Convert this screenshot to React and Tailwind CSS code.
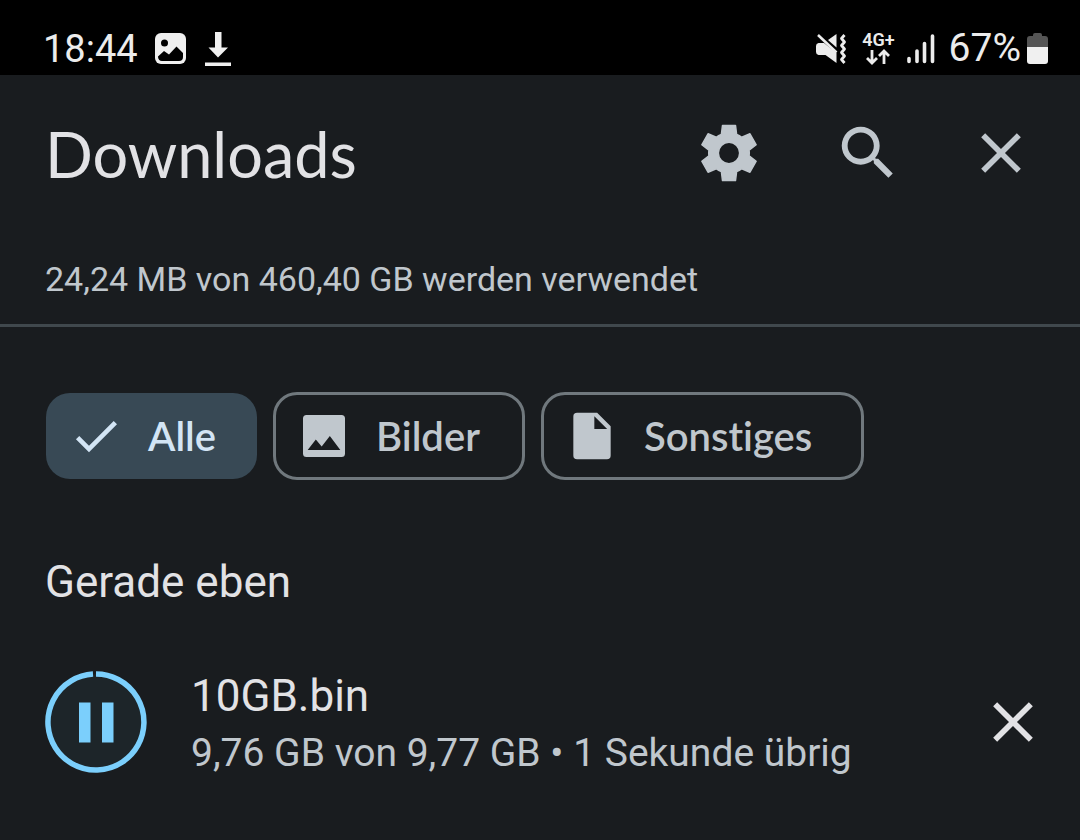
import React, { useState } from 'react';
import { MdCheck, MdClose, MdSearch } from 'react-icons/md';

function MuteIcon() {
  return (
    <svg width="32" height="30" viewBox="0 0 32 30" fill="none" aria-hidden="true">
      <path d="M12 6 20.500 0V13.500z" fill="#ececec" />
      <path d="M2.500 9H8L20.500 19V29L9.500 21H2.500Q0 20.500 0 18V12Q0 9.500 2.500 9z" fill="#ececec" />
      <path d="M2 1 20.500 18.500" stroke="#ececec" strokeWidth="2.600" />
      <path
        d="M28.500 1 25.500 4.500 28.500 8 25.500 11.500 28.500 15 25.500 18.500 28.500 22 25.500 25.500 28.500 29"
        stroke="#ececec"
        strokeWidth="2.800"
        strokeLinejoin="round"
      />
    </svg>
  );
}

function PhotoIcon() {
  return (
    <svg width="32" height="32" viewBox="0 0 32 32" aria-hidden="true">
      <rect width="31" height="31" x="0" y="0" rx="6" fill="#f0f0f0" />
      <circle cx="9.500" cy="10" r="3.500" fill="#000" />
      <path d="M3 23.500 9 18 14 21.500 21.500 13.500 28 20V24Q28 28 24 28H7Q3.500 28 3 24z" fill="#000" />
    </svg>
  );
}

function DownloadIcon() {
  return (
    <svg width="26" height="34" viewBox="0 0 26 34" fill="#f0f0f0" aria-hidden="true">
      <path d="M10 0h6.500v15.500H23L13 25.500 3.500 15.500H10z" />
      <path d="M0 30.500h26V34H0z" />
    </svg>
  );
}

function DataArrowsIcon() {
  return (
    <svg width="24" height="16" viewBox="0 0 24 16" fill="none" stroke="#ececec" strokeWidth="2.800" aria-hidden="true">
      <path d="M6 1V14M1 9 6 14 11 9" />
      <path d="M18 15V2M13 7 18 2 23 7" />
    </svg>
  );
}

function SignalIcon() {
  return (
    <svg width="28" height="30" viewBox="0 0 28 30" stroke="#ececec" strokeWidth="3.600" strokeLinecap="round" aria-hidden="true">
      <path d="M2 24.500V27.500M10 17V27.500M17.500 9.500V27.500M25.500 2V27.500" />
    </svg>
  );
}

function BatteryIcon() {
  return (
    <svg width="22" height="31" viewBox="0 0 22 31" aria-hidden="true">
      <path d="M6 3V2Q6 0 8 0h5q2 0 2 2v1h3q3 0 3 3v8H0V6Q0 3 3 3z" fill="#555" />
      <path d="M0 14H21V28Q21 31 18 31H3Q0 31 0 28z" fill="#f0f0f0" />
    </svg>
  );
}

function GearIcon() {
  return (
    <svg width="68" height="68" viewBox="0 0 24 24" fill="currentColor" aria-hidden="true">
      <path
        fillRule="evenodd"
        stroke="currentColor"
        strokeWidth="0.500"
        strokeLinejoin="round"
        d="M9.700 2.250H14.300L14.700 5.400Q15.700 5.800 16.500 6.450L19.400 5.200 21.600 9.100 19.100 11Q19.250 12 19.100 13L21.600 14.900 19.400 18.800 16.500 17.550Q15.700 18.200 14.700 18.600L14.300 21.750H9.700L9.300 18.600Q8.300 18.200 7.500 17.550L4.600 18.800 2.400 14.900 4.900 13Q4.750 12 4.900 11L2.400 9.100 4.600 5.200 7.500 6.450Q8.300 5.800 9.300 5.400zM12 8.250a3.750 3.750 0 1 0 0 7.500 3.750 3.750 0 0 0 0-7.500z"
      />
    </svg>
  );
}

function ImageIcon() {
  return (
    <svg width="56" height="56" viewBox="0 0 24 24" fill="currentColor" aria-hidden="true">
      <path
        fillRule="evenodd"
        d="M4.500 3H19.500Q21 3 21 4.500V19.500Q21 21 19.500 21H4.500Q3 21 3 19.500V4.500Q3 3 4.500 3zM8.500 13.500 5 18H19L14.500 12 11 16.510z"
      />
    </svg>
  );
}

function FileIcon() {
  return (
    <svg width="56" height="56" viewBox="0 0 24 24" fill="currentColor" aria-hidden="true">
      <path
        fillRule="evenodd"
        d="M5.600 2H14.200L20 7.800V20.400Q20 22 18.400 22H5.600Q4 22 4 20.400V3.600Q4 2 5.600 2zM13 3.500V9H18.500z"
      />
    </svg>
  );
}

function PauseRing() {
  return (
    <svg width="102" height="102" viewBox="0 0 102 102" aria-hidden="true">
      <circle cx="51" cy="51" r="48" fill="#1d2529" />
      <path d="M51 3A48 48 0 1 1 48 3.090" fill="none" stroke="#7bcffc" strokeWidth="5.500" />
      <path d="M34 31.500h11.500v40H34zM57 31.500h11.500v40H57z" fill="#7bcffc" />
    </svg>
  );
}

const filters = [
  { id: 'all', label: 'Alle', Icon: () => <MdCheck size={56} />, width: '' },
  { id: 'images', label: 'Bilder', Icon: ImageIcon, width: '' },
  { id: 'other', label: 'Sonstiges', Icon: FileIcon, width: 'min-w-[323px]' },
];

function StatusBar() {
  return (
    <div className="flex h-[75px] items-center justify-between bg-black pt-[22px] pr-[31px] pl-[43px] leading-none text-[#ececec]">
      <div className="flex items-center">
        <span className="text-[38px]">18:44</span>
        <span className="ml-[17px]">
          <PhotoIcon />
        </span>
        <span className="ml-[18px]">
          <DownloadIcon />
        </span>
      </div>
      <div className="flex items-center">
        <MuteIcon />
        <div className="ml-3.5 flex flex-col items-center gap-px">
          <span className="text-lg leading-4 font-semibold">4G+</span>
          <DataArrowsIcon />
        </div>
        <span className="ml-3">
          <SignalIcon />
        </span>
        <span className="ml-3.5 text-[39px]">67%</span>
        <span className="ml-1.5">
          <BatteryIcon />
        </span>
      </div>
    </div>
  );
}

export default function App() {
  const [active, setActive] = useState('all');

  return (
    <div className="min-h-screen bg-[#191c1f] font-[Roboto,sans-serif] text-[#e2e2e5]">
      <StatusBar />

      <header className="border-b-[3px] border-[#40484d]">
        <div className="flex h-[156px] items-center justify-between pr-[45px] pl-[45px]">
          <h1 className="font-[Lato,sans-serif] text-[63px] leading-none">Downloads</h1>
          <div className="flex items-center text-[#c0c7cd]">
            <button type="button" aria-label="Einstellungen">
              <GearIcon />
            </button>
            <button type="button" aria-label="Suchen" className="ml-[70px]">
              <MdSearch size={70} />
            </button>
            <button type="button" aria-label="Schließen" className="ml-16">
              <MdClose size={68} />
            </button>
          </div>
        </div>
        <p className="px-[45px] pt-[26px] pb-[23px] text-[34px] leading-[44px] text-[#c0c7cd]">
          24,24 MB von 460,40 GB werden verwendet
        </p>
      </header>

      <main>
        <div className="flex items-center gap-4 px-[46px] pt-[65px]">
          {filters.map(({ id, label, Icon, width }) => (
            <button
              key={id}
              type="button"
              aria-pressed={active === id}
              onClick={() => setActive(id)}
              className={`flex items-center rounded-[24px] font-[Lato,sans-serif] text-[40px] leading-none font-semibold [font-variant-ligatures:none] ${width} ${
                active === id
                  ? 'h-[86px] bg-[#384955] pr-[41px] pl-[22px] text-[#d3e5f5]'
                  : 'h-[88px] border-[3px] border-[#70787d] pr-[42px] pl-5 text-[#c0c7cd]'
              }`}
            >
              <Icon />
              <span className="ml-6">{label}</span>
            </button>
          ))}
        </div>

        <h2 className="px-[45px] pt-[74px] text-[44px] leading-[56px]">Gerade eben</h2>

        <div className="flex items-center pt-[52px] pr-[33px] pl-[45px]">
          <button type="button" aria-label="Download pausieren">
            <PauseRing />
          </button>
          <div className="ml-11 flex-1 pt-1.5">
            <p className="text-[44px] leading-[56px]">10GB.bin</p>
            <p className="text-[39px] leading-[58px] text-[#c0c7cd]">9,76 GB von 9,77 GB • 1 Sekunde übrig</p>
          </div>
          <button type="button" aria-label="Download abbrechen">
            <MdClose size={68} />
          </button>
        </div>
      </main>
    </div>
  );
}
